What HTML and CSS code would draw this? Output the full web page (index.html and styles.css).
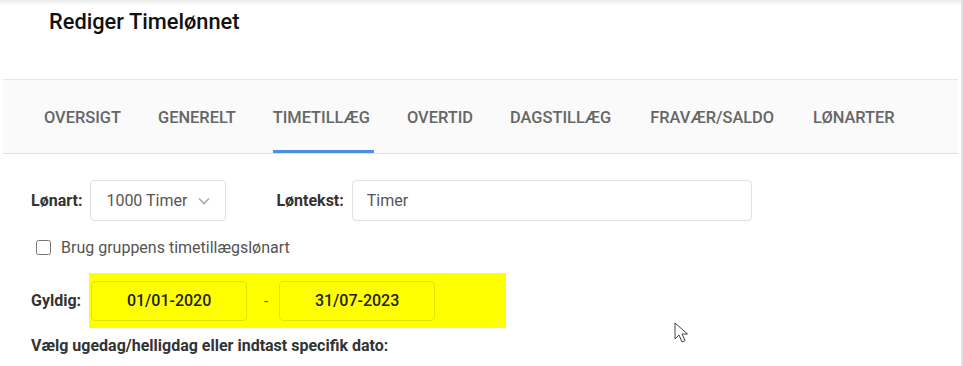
FILE: index.html
```html
<!DOCTYPE html>
<html lang="da">
<head>
    <meta charset="UTF-8">
    <meta name="viewport" content="width=device-width, initial-scale=1.0">
    <title>Rediger Timelønnet</title>
    <link rel="stylesheet" href="styles.css">
</head>
<body>

<div class="dialog">
    <div class="dialog-header">
        <h1>Rediger Timelønnet</h1>
    </div>

    <nav class="tabs">
        <a class="tab">Oversigt</a>
        <a class="tab">Generelt</a>
        <a class="tab active">Timetillæg</a>
        <a class="tab">Overtid</a>
        <a class="tab">Dagstillæg</a>
        <a class="tab">Fravær/Saldo</a>
        <a class="tab">Lønarter</a>
    </nav>

    <form class="form">
        <div class="row">
            <label class="label">Lønart:</label>
            <div class="select">
                <span>1000 Timer</span>
                <svg width="12" height="8" viewBox="0 0 12 8"><path d="M1 1.5l5 5 5-5" fill="none" stroke="#aaa" stroke-width="1.6"/></svg>
            </div>
            <label class="label label-gap">Løntekst:</label>
            <input class="input text-input" type="text" value="Timer">
        </div>

        <label class="check-row">
            <input type="checkbox">
            <span>Brug gruppens timetillægslønart</span>
        </label>

        <div class="row row-valid">
            <label class="label">Gyldig:</label>
            <div class="highlight">
                <input class="input date-input" type="text" value="01/01-2020">
                <span class="dash">-</span>
                <input class="input date-input" type="text" value="31/07-2023">
            </div>
        </div>

        <p class="section-label">Vælg ugedag/helligdag eller indtast specifik dato:</p>
    </form>

    <svg class="cursor" width="14" height="22" viewBox="0 0 14 22">
        <path d="M1 1v16l4-4 3 7 3-1.3-3-6.7h5.5z" fill="#fff" stroke="#444" stroke-width="1"/>
    </svg>
</div>

</body>
</html>
```

FILE: styles.css
```css
body {
    margin: 0;
    font-family: Roboto, "Liberation Sans", Arial, sans-serif;
    background: #fff;
}

.dialog {
    position: relative;
    width: 961px;
    height: 366px;
    border-right: 2px solid #e2e2e2;
    background: linear-gradient(#ebebeb, #fff 5px);
    overflow: hidden;
}

.dialog-header {
    height: 79px;
    padding-left: 49px;
    box-sizing: border-box;
    padding-top: 9px;
}

.dialog-header h1 {
    margin: 0;
    font-size: 21.8px;
    font-weight: 500;
    color: #111;
}

.tabs {
    display: flex;
    height: 75px;
    margin: 0 3px 0 3px;
    padding-left: 41px;
    background: #fafafa;
    border-top: 1px solid #e8e8e8;
    border-bottom: 1px solid #e0e0e0;
    box-sizing: border-box;
}

.tab {
    display: flex;
    align-items: center;
    margin-right: 37px;
    padding: 4px 0 0;
    font-size: 16.4px;
    font-weight: 500;
    text-transform: uppercase;
    color: #666;
    border-bottom: 3px solid transparent;
    cursor: pointer;
}

.tab.active {
    padding-right: 4px;
    margin-right: 33px;
    border-bottom-color: #4a90e2;
}

.tab:nth-child(5),
.tab:nth-child(6) {
    margin-right: 39px;
}

.form {
    padding: 26px 0 0 31px;
}

.row {
    display: flex;
    align-items: center;
}

.label {
    font-size: 16px;
    font-weight: 700;
    color: #333;
    margin-right: 8px;
}

.label-gap {
    margin-left: 50px;
}

.select {
    display: flex;
    align-items: center;
    justify-content: space-between;
    width: 136px;
    height: 41px;
    padding: 0 15px 0 15px;
    box-sizing: border-box;
    border: 1px solid #e0e0e0;
    border-radius: 4px;
    font-size: 16px;
    color: #555;
}

.input {
    height: 41px;
    box-sizing: border-box;
    border: 1px solid #e0e0e0;
    border-radius: 4px;
    font-family: inherit;
    font-size: 16px;
    color: #555;
    outline: none;
    background: #fff;
}

.text-input {
    width: 400px;
    padding: 0 14px;
}

.check-row {
    display: flex;
    align-items: center;
    margin: 17px 0 0 5px;
    font-size: 16px;
    color: #555;
}

.check-row input {
    width: 15px;
    height: 15px;
    margin: 0 10px 0 0;
}

.row-valid {
    margin-top: 16px;
}

.highlight {
    display: flex;
    align-items: center;
    width: 417px;
    height: 55px;
    padding: 0 2px;
    box-sizing: border-box;
    background: #ffff00;
}

.date-input {
    width: 156px;
    height: 40px;
    text-align: center;
    background: transparent;
    border-color: #e3e300;
    color: #222;
    font-weight: 500;
}

.dash {
    width: 32px;
    padding-left: 6px;
    box-sizing: border-box;
    text-align: center;
    font-size: 15px;
    color: #555;
}

.section-label {
    margin: 8px 0 0;
    font-size: 16px;
    font-weight: 700;
    color: #333;
}

.cursor {
    position: absolute;
    left: 674px;
    top: 322px;
}
```
